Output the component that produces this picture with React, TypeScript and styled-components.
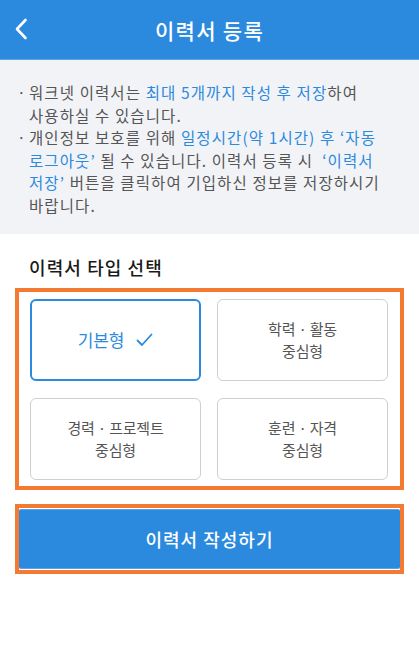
import styled, { createGlobalStyle } from 'styled-components';

const GlobalStyle = createGlobalStyle`
  html, body {
    margin: 0;
    padding: 0;
    background: #ffffff;
  }
  body {
    font-family: "Noto Sans CJK KR", "Noto Sans", sans-serif;
  }
`;

const types = [
  { id: 'basic', lines: ['기본형'] },
  { id: 'edu', lines: ['학력 · 활동', '중심형'] },
  { id: 'career', lines: ['경력 · 프로젝트', '중심형'] },
  { id: 'train', lines: ['훈련 · 자격', '중심형'] },
];

const App = () => {
  const selected = 'basic';
  return (
    <Page>
      <GlobalStyle />
      <Header>
        <BackButton aria-label="뒤로">
          <svg width="14" height="22" viewBox="0 0 14 22">
            <path d="M11.5 2 L3 11 L11.5 20" fill="none" stroke="#fff" strokeWidth="2.6" strokeLinecap="round" strokeLinejoin="round" />
          </svg>
        </BackButton>
        <Title>이력서 등록</Title>
      </Header>

      <Notice>
        <NoticeItem>
          워크넷 이력서는 <Hl>최대 5개까지 작성 후 저장</Hl>하여 사용하실 수 있습니다.
        </NoticeItem>
        <NoticeItem>
          개인정보 보호를 위해 <Hl>일정시간(약 1시간) 후 ‘자동 로그아웃’</Hl> 될 수 있습니다. 이력서 등록 시 &nbsp;<Hl>‘이력서 저장’</Hl> 버튼을 클릭하여 기입하신 정보를 저장하시기 바랍니다.
        </NoticeItem>
      </Notice>

      <Section>
        <SectionTitle>이력서 타입 선택</SectionTitle>
        <Highlight>
          <TypeGrid>
            {types.map((t) => (
              <TypeCard key={t.id} $active={t.id === selected}>
                {t.id === selected ? (
                  <ActiveLabel>
                    {t.lines[0]}
                    <svg width="17" height="14" viewBox="0 0 17 14">
                      <path d="M1.5 7.5 L6 12 L15.5 1.5" fill="none" stroke="#2b8ade" strokeWidth="1.8" strokeLinecap="round" strokeLinejoin="round" />
                    </svg>
                  </ActiveLabel>
                ) : (
                  t.lines.map((l) => <span key={l}>{l}</span>)
                )}
              </TypeCard>
            ))}
          </TypeGrid>
        </Highlight>

        <ButtonFrame>
          <PrimaryButton>이력서 작성하기</PrimaryButton>
        </ButtonFrame>
      </Section>
    </Page>
  );
};

const Page = styled.div`
  width: 419px;
  min-height: 648px;
  background: #ffffff;
`;

const Header = styled.header`
  position: relative;
  height: 59px;
  background: #2b8ade;
  display: flex;
  align-items: center;
  justify-content: center;
  border-bottom: 1px solid #5aa4e6;
`;

const BackButton = styled.button`
  position: absolute;
  left: 14px;
  top: 18px;
  padding: 0;
  border: none;
  background: none;
  display: flex;
`;

const Title = styled.h1`
  margin: 0;
  color: #ffffff;
  font-size: 21px;
  font-weight: 500;
  letter-spacing: 1.3px;
`;

const Notice = styled.ul`
  margin: 0;
  list-style: none;
  background: #f2f3f7;
  padding: 21px 37px 27px 29px;
  height: 174px;
  box-sizing: border-box;
`;

const NoticeItem = styled.li`
  position: relative;
  color: #555555;
  font-size: 15.5px;
  line-height: 22.5px;
  letter-spacing: 1.1px;
  word-break: keep-all;

  &::before {
    content: '·';
    position: absolute;
    left: -12px;
    top: 0;
    color: #555555;
  }
`;

const Hl = styled.span`
  color: #2b8ade;
`;

const Section = styled.section`
  padding: 20px 15px 0;
`;

const SectionTitle = styled.h2`
  margin: 0 0 8px 14px;
  font-size: 18px;
  font-weight: 500;
  color: #1a1a1a;
  line-height: 26px;
  letter-spacing: 1.1px;
`;

const Highlight = styled.div`
  border: 4px solid #f37a30;
  padding: 7px 12px 6px 11px;
`;

const TypeGrid = styled.div`
  display: grid;
  grid-template-columns: 1fr 1fr;
  column-gap: 16px;
  row-gap: 17px;
`;

const TypeCard = styled.div<{ $active?: boolean }>`
  height: 82px;
  box-sizing: border-box;
  border-radius: 6px;
  border: ${(p) => (p.$active ? '2px solid #2b8ade' : '1px solid #cfcfcf')};
  background: #ffffff;
  display: flex;
  flex-direction: column;
  align-items: center;
  justify-content: center;
  color: #555555;
  font-size: 15px;
  line-height: 22px;
  letter-spacing: -0.2px;
`;

const ActiveLabel = styled.span`
  display: flex;
  align-items: center;
  gap: 12px;
  color: #2b8ade;
  font-size: 17px;
`;

const ButtonFrame = styled.div`
  margin-top: 14px;
  border: 4px solid #f37a30;
  padding: 1px 0;
  background: #ffffff;
`;

const PrimaryButton = styled.button`
  display: block;
  width: 100%;
  height: 60px;
  border: none;
  border-top: 1px solid #5aa4e6;
  border-bottom: 1px solid #5aa4e6;
  border-radius: 2px;
  background: #2b8ade;
  color: #ffffff;
  font-family: inherit;
  font-size: 18px;
  font-weight: 500;
  letter-spacing: 1px;
`;

export default App;
